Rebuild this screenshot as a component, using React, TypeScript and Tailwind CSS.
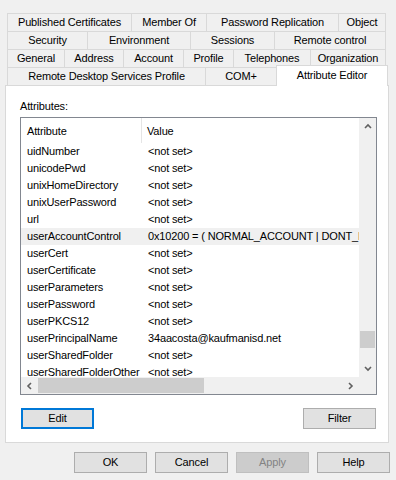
import React from "react";

const tabRows: [string, number][][] = [
  [
    ["Published Certificates", 124],
    ["Member Of", 75],
    ["Password Replication", 132],
    ["Object", 48],
  ],
  [
    ["Security", 80],
    ["Environment", 103],
    ["Sessions", 84],
    ["Remote control", 112],
  ],
  [
    ["General", 57],
    ["Address", 59],
    ["Account", 60],
    ["Profile", 50],
    ["Telephones", 77],
    ["Organization", 76],
  ],
];

const attributes: [string, string][] = [
  ["uidNumber", "<not set>"],
  ["unicodePwd", "<not set>"],
  ["unixHomeDirectory", "<not set>"],
  ["unixUserPassword", "<not set>"],
  ["url", "<not set>"],
  ["userAccountControl", "0x10200 = ( NORMAL_ACCOUNT | DONT_EXPIRE_PASSWORD )"],
  ["userCert", "<not set>"],
  ["userCertificate", "<not set>"],
  ["userParameters", "<not set>"],
  ["userPassword", "<not set>"],
  ["userPKCS12", "<not set>"],
  ["userPrincipalName", "34aacosta@kaufmanisd.net"],
  ["userSharedFolder", "<not set>"],
  ["userSharedFolderOther", "<not set>"],
];

const Chevron = ({ dir }: { dir: "up" | "down" | "left" | "right" }) => {
  const paths = {
    up: "M1 5 L4 2 L7 5",
    down: "M1 2 L4 5 L7 2",
    left: "M5 1 L2 4 L5 7",
    right: "M2 1 L5 4 L2 7",
  };
  return (
    <svg width="8" height="8" viewBox="0 0 8 8">
      <path d={paths[dir]} fill="none" stroke="#606060" strokeWidth="1.6" />
    </svg>
  );
};

const Tab = ({ label, width, last }: { label: string; width: number; last?: boolean }) => (
  <div
    className={`h-[18px] flex items-center justify-center border-t border-l border-[#d9d9d9] whitespace-nowrap ${last ? "border-r" : ""}`}
    style={{ width }}
  >
    {label}
  </div>
);

const Button = ({
  label,
  focused,
  disabled,
}: {
  label: string;
  focused?: boolean;
  disabled?: boolean;
}) => (
  <div
    className={`w-[73px] h-[21px] flex items-center justify-center ${
      focused
        ? "border-2 border-[#0078d7] bg-[#e1e1e1]"
        : disabled
        ? "border border-[#bfbfbf] bg-[#cccccc] text-[#838383]"
        : "border border-[#adadad] bg-[#e1e1e1]"
    }`}
  >
    {label}
  </div>
);

export default function App() {
  return (
    <div
      className="w-[396px] h-[480px] bg-[#f0f0f0] pt-[13px] text-[11px] tracking-[-0.15px] text-black overflow-hidden"
      style={{ fontFamily: '"Liberation Sans", Arial, sans-serif' }}
    >
      {/* TABS */}
      <div className="ml-[7px]">
        {tabRows.map((row, i) => (
          <div key={i} className="flex">
            {row.map(([label, w], j) => (
              <Tab key={label} label={label} width={w} last={j === row.length - 1} />
            ))}
          </div>
        ))}
        <div className="flex h-[18px]">
          <Tab label="Remote Desktop Services Profile" width={198} />
          <Tab label="COM+" width={71} />
          <div className="relative z-10 self-start -mt-[2px] w-[112px] h-[21px] bg-white border-t border-l border-r border-[#d9d9d9] flex justify-center pt-[2px] leading-[14px] whitespace-nowrap">
            Attribute Editor
          </div>
        </div>
      </div>

      {/* PANEL */}
      <div className="ml-[5px] w-[384px] h-[358px] border border-[#d9d9d9] bg-white">
        <div className="ml-[14px] mt-[13px] h-[14px] leading-[14px]">Attributes:</div>
        <div className="ml-[14px] mt-[4px] w-[357px] h-[278px] border border-[#828790] grid grid-cols-[1fr_17px] grid-rows-[1fr_17px]">
          <div className="overflow-hidden">
            <div className="flex h-[25px]">
              <div className="w-[121px] pl-[6px] pt-[1px] flex items-center border-r border-[#e5e5e5]">Attribute</div>
              <div className="pl-[5px] pt-[1px] flex items-center">Value</div>
            </div>
            {attributes.map(([name, value]) => (
              <div
                key={name}
                className={`flex h-[17px] items-center whitespace-nowrap ${
                  name === "userAccountControl" ? "bg-[#f0f0f0]" : ""
                }`}
              >
                <div className="w-[121px] shrink-0 pl-[6px]">{name}</div>
                <div className="pl-[6px]">{value}</div>
              </div>
            ))}
          </div>

          {/* VERTICAL SCROLLBAR */}
          <div className="bg-[#f0f0f0] flex flex-col">
            <div className="h-[17px] flex items-center justify-center">
              <Chevron dir="up" />
            </div>
            <div className="h-[196px]" />
            <div className="h-[17px] mx-[1px] bg-[#cdcdcd]" />
            <div className="flex-1" />
            <div className="h-[17px] flex items-center justify-center">
              <Chevron dir="down" />
            </div>
          </div>

          {/* HORIZONTAL SCROLLBAR */}
          <div className="bg-[#f0f0f0] flex">
            <div className="w-[17px] flex items-center justify-center">
              <Chevron dir="left" />
            </div>
            <div className="w-[166px] my-[1px] bg-[#cdcdcd]" />
            <div className="flex-1" />
            <div className="w-[17px] flex items-center justify-center">
              <Chevron dir="right" />
            </div>
          </div>
          <div className="bg-[#f0f0f0]" />
        </div>

        <div className="flex justify-between pl-[15px] pr-[12px] mt-[13px]">
          <Button label="Edit" focused />
          <Button label="Filter" />
        </div>
      </div>

      {/* DIALOG BUTTONS */}
      <div className="flex gap-[8px] ml-[74px] mt-[9px]">
        <Button label="OK" />
        <Button label="Cancel" />
        <Button label="Apply" disabled />
        <Button label="Help" />
      </div>
    </div>
  );
}
